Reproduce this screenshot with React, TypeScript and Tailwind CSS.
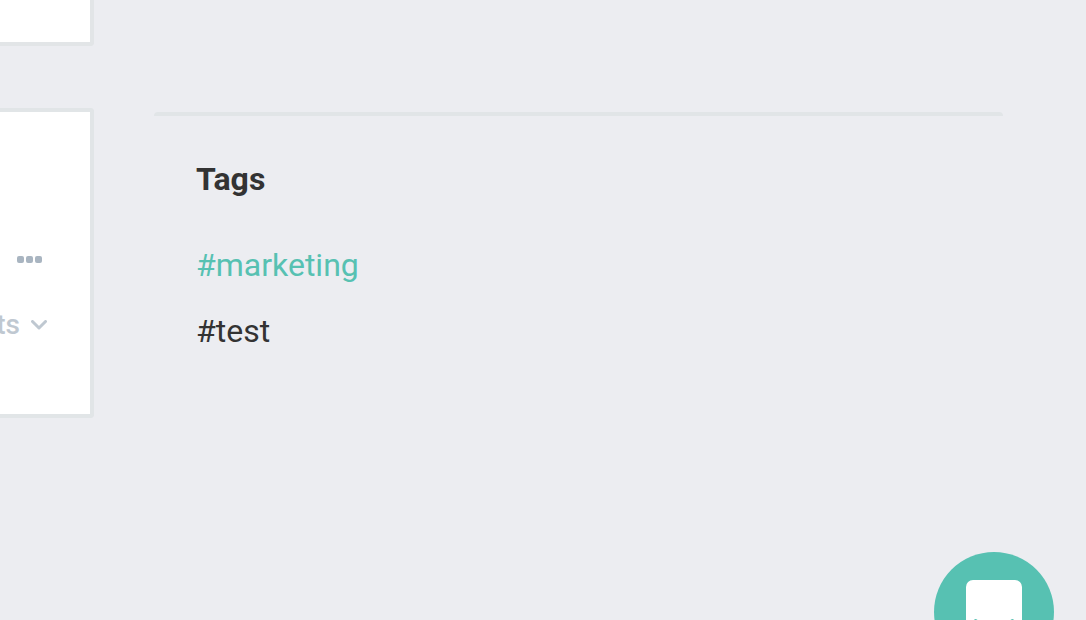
interface Tag {
    name: string;
    active: boolean;
}

const tags: Tag[] = [
    { name: "marketing", active: true },
    { name: "test", active: false },
];

function FeedColumn() {
    return (
        <main className="w-[94px] shrink-0 overflow-hidden">
            <section className="h-[46px] bg-white border-r-4 border-b-4 border-[#e2e5e7] rounded-br-[4px]" />

            <section className="mt-[62px] pt-36 pb-[73px] bg-white border-y-4 border-r-4 border-[#e1e5e7] rounded-r-[4px]">
                {/* Post actions */}
                <div className="flex flex-col items-end gap-[46px]">
                    <button aria-label="More options" className="flex gap-[2px] mr-12">
                        <span className="w-[7px] h-[7px] rounded-[2px] bg-[#a9b5c1]" />
                        <span className="w-[7px] h-[7px] rounded-[2px] bg-[#a9b5c1]" />
                        <span className="w-[7px] h-[7px] rounded-[2px] bg-[#a9b5c1]" />
                    </button>

                    <button className="flex items-center gap-[11px] mr-[43px] text-[28px] leading-8 font-medium text-[#bfc8d1]">
                        ts
                        <svg width="16" height="10" viewBox="0 0 16 10" fill="none" stroke="currentColor" strokeWidth="3" strokeLinecap="round" strokeLinejoin="round">
                            <path d="M1.5 1.5 8 8 14.5 1.5" />
                        </svg>
                    </button>
                </div>
            </section>
        </main>
    );
}

function TagsPanel() {
    return (
        <aside className="flex-1 ml-[60px] mr-[83px] mt-28">
            <div className="h-1 rounded-t-[4px] bg-[#e1e5e7]" />
            <div className="px-[42px] pt-11 text-[32px] leading-[38px]">
                <h2 className="font-bold">Tags</h2>
                <ul className="mt-12 space-y-7">
                    {tags.map((tag) => (
                        <li key={tag.name}>
                            <a href={`#${tag.name}`} className={tag.active ? "text-[#57c1b2]" : "text-[#333333]"}>
                                #{tag.name}
                            </a>
                        </li>
                    ))}
                </ul>
            </div>
        </aside>
    );
}

function ChatLauncher() {
    return (
        <button
            aria-label="Open chat"
            className="fixed right-8 -bottom-[52px] w-[120px] h-[120px] flex items-center justify-center rounded-full bg-[#57c1b2]"
        >
            <svg width="56" height="64" viewBox="0 0 56 64">
                <path d="M7 0h42a7 7 0 0 1 7 7v57l-10-6H7a7 7 0 0 1-7-7V7a7 7 0 0 1 7-7Z" fill="white" />
                <path d="M9.5 40.5c10 8 27 8 37 0" fill="none" stroke="#57c1b2" strokeWidth="3" strokeLinecap="round" />
            </svg>
        </button>
    );
}

export default function App() {
    return (
        <div className="min-h-screen flex items-start bg-[#ecedf1] text-[#333333] font-[Roboto,sans-serif]">
            <FeedColumn />
            <TagsPanel />
            <ChatLauncher />
        </div>
    );
}
